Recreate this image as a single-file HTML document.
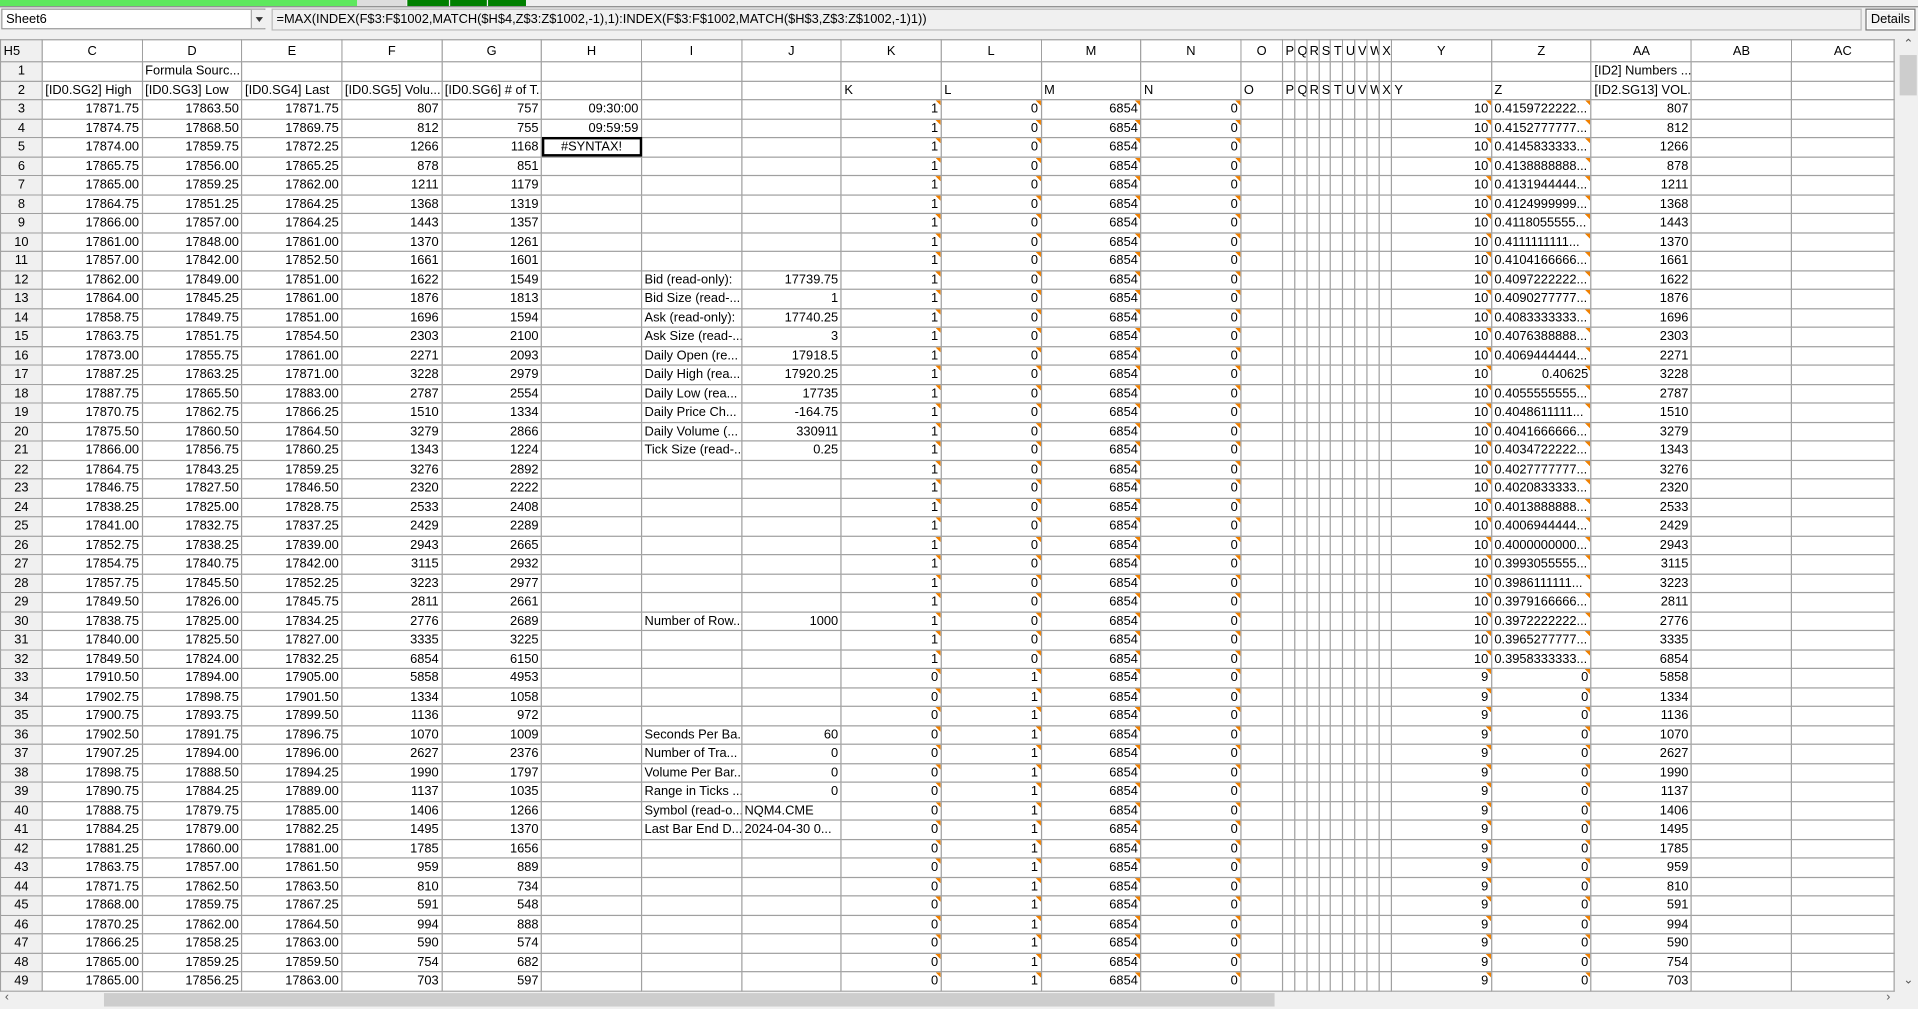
<!DOCTYPE html>
<html><head><meta charset="utf-8">
<style>
html,body{margin:0;padding:0;background:#f0f0f0;overflow:hidden;width:1918px;height:1009px}
#w{position:absolute;left:0;top:0;width:1568px;height:825px;transform:scale(1.22321,1.2230);transform-origin:0 0;font-family:"Liberation Sans",sans-serif;font-size:10.5px;color:#000;background:#f0f0f0}
.bar{position:absolute;top:0;height:5px}
#nm{position:absolute;left:1px;top:7px;width:216px;height:17px;background:#fff;border:1px solid #999;box-sizing:border-box;padding:2px 3px;font-size:10.5px}
#dd{position:absolute;left:205px;top:8px;width:12px;height:15px;background:#f0f0f0;border-left:1px solid #aaa}
#dd:after{content:"";position:absolute;left:3px;top:6px;border:3px solid transparent;border-top:4px solid #333}
#fx{position:absolute;left:222px;top:7px;width:1300px;height:18px;border:1px solid #bbb;box-sizing:border-box;padding:2px 3px;background:#f0f0f0}
#det{position:absolute;left:1525px;top:7px;width:41px;height:18px;border:1px solid #777;box-sizing:border-box;background:#f4f4f4;text-align:center;padding-top:2px;box-shadow:inset 0 0 0 1px #fff}
table{position:absolute;left:0;top:32px;border-collapse:collapse;table-layout:fixed;width:1548px;background:#fff}
td,th{border:1px solid #a0a0a0;height:14.5px;padding:0 2px;white-space:nowrap;overflow:hidden;text-overflow:clip;text-align:right;font-weight:normal;line-height:14px;position:relative}
th{background:#f0f0f0;text-align:center}
tr.h th{background:#fff;height:17px}
tr.h th:first-child{background:#f0f0f0}
td.l{text-align:left}
td.c{text-align:center}
tr.d td:nth-child(10),tr.d td:nth-child(11),tr.d td:nth-child(12),tr.d td:nth-child(13),tr.d td:nth-child(24),tr.d td:nth-child(25){background:linear-gradient(225deg,#f08000 0,#f08000 3px,transparent 3.1px) no-repeat}
#sel{position:absolute;left:443px;top:111.5px;width:82px;height:16px;border:2px solid #000;box-sizing:border-box}
#vs{position:absolute;left:1552px;top:32px;width:16px;height:779px;background:#f0f0f0}
#vt{position:absolute;left:1553px;top:45px;width:14px;height:33px;background:#cdcdcd}
#hs{position:absolute;left:0;top:811px;width:1552px;height:13px;background:#f0f0f0}
#ht{position:absolute;left:85px;top:812px;width:957px;height:11px;background:#cdcdcd}
.ar{position:absolute;font-size:10px;color:#555}
</style></head><body><div id="w">
<div class="bar" style="left:0;width:292px;background:#5ee85e"></div>
<div class="bar" style="left:292px;width:40px;background:#ddd"></div>
<div class="bar" style="left:333px;width:34px;background:#008000"></div>
<div class="bar" style="left:368px;width:30px;background:#008000"></div>
<div class="bar" style="left:399px;width:31px;background:#008000"></div>
<div style="position:absolute;left:0;top:5px;width:1568px;height:1px;background:#888"></div>
<div id="nm">Sheet6</div><div id="dd"></div>
<div id="fx">=MAX(INDEX(F$3:F$1002,MATCH($H$4,Z$3:Z$1002,-1),1):INDEX(F$3:F$1002,MATCH($H$3,Z$3:Z$1002,-1)1))</div>
<div id="det">Details</div>
<table>
<colgroup><col style="width:34px"><col span="12" style="width:81.67px"><col style="width:34px"><col span="9" style="width:9.9px"><col span="4" style="width:81.8px"><col style="width:84px"></colgroup>
<tr class="h"><th style="text-align:left">H5</th><th>C</th><th>D</th><th>E</th><th>F</th><th>G</th><th>H</th><th>I</th><th>J</th><th>K</th><th>L</th><th>M</th><th>N</th><th>O</th><th>P</th><th>Q</th><th>R</th><th>S</th><th>T</th><th>U</th><th>V</th><th>W</th><th>X</th><th>Y</th><th>Z</th><th>AA</th><th>AB</th><th>AC</th></tr>
<tr><th>1</th><td></td><td class="l">Formula Sourc...</td><td></td><td></td><td></td><td></td><td></td><td></td><td></td><td></td><td></td><td></td><td></td><td></td><td></td><td></td><td></td><td></td><td></td><td></td><td></td><td></td><td></td><td></td><td class="l">[ID2] Numbers ...</td><td></td><td></td></tr>
<tr><th>2</th><td class="l">[ID0.SG2] High</td><td class="l">[ID0.SG3] Low</td><td class="l">[ID0.SG4] Last</td><td class="l">[ID0.SG5] Volu...</td><td class="l">[ID0.SG6] # of T...</td><td></td><td></td><td></td><td class="l">K</td><td class="l">L</td><td class="l">M</td><td class="l">N</td><td class="l">O</td><td class="l">P</td><td class="l">Q</td><td class="l">R</td><td class="l">S</td><td class="l">T</td><td class="l">U</td><td class="l">V</td><td class="l">W</td><td class="l">X</td><td class="l">Y</td><td class="l">Z</td><td class="l">[ID2.SG13] VOL...</td><td></td><td></td></tr>
<tr class="d"><th>3</th><td>17871.75</td><td>17863.50</td><td>17871.75</td><td>807</td><td>757</td><td>09:30:00</td><td></td><td></td><td>1</td><td>0</td><td>6854</td><td>0</td><td></td><td></td><td></td><td></td><td></td><td></td><td></td><td></td><td></td><td></td><td>10</td><td class="l">0.4159722222...</td><td>807</td><td></td><td></td></tr>
<tr class="d"><th>4</th><td>17874.75</td><td>17868.50</td><td>17869.75</td><td>812</td><td>755</td><td>09:59:59</td><td></td><td></td><td>1</td><td>0</td><td>6854</td><td>0</td><td></td><td></td><td></td><td></td><td></td><td></td><td></td><td></td><td></td><td></td><td>10</td><td class="l">0.4152777777...</td><td>812</td><td></td><td></td></tr>
<tr class="d"><th>5</th><td>17874.00</td><td>17859.75</td><td>17872.25</td><td>1266</td><td>1168</td><td class="c">#SYNTAX!</td><td></td><td></td><td>1</td><td>0</td><td>6854</td><td>0</td><td></td><td></td><td></td><td></td><td></td><td></td><td></td><td></td><td></td><td></td><td>10</td><td class="l">0.4145833333...</td><td>1266</td><td></td><td></td></tr>
<tr class="d"><th>6</th><td>17865.75</td><td>17856.00</td><td>17865.25</td><td>878</td><td>851</td><td></td><td></td><td></td><td>1</td><td>0</td><td>6854</td><td>0</td><td></td><td></td><td></td><td></td><td></td><td></td><td></td><td></td><td></td><td></td><td>10</td><td class="l">0.4138888888...</td><td>878</td><td></td><td></td></tr>
<tr class="d"><th>7</th><td>17865.00</td><td>17859.25</td><td>17862.00</td><td>1211</td><td>1179</td><td></td><td></td><td></td><td>1</td><td>0</td><td>6854</td><td>0</td><td></td><td></td><td></td><td></td><td></td><td></td><td></td><td></td><td></td><td></td><td>10</td><td class="l">0.4131944444...</td><td>1211</td><td></td><td></td></tr>
<tr class="d"><th>8</th><td>17864.75</td><td>17851.25</td><td>17864.25</td><td>1368</td><td>1319</td><td></td><td></td><td></td><td>1</td><td>0</td><td>6854</td><td>0</td><td></td><td></td><td></td><td></td><td></td><td></td><td></td><td></td><td></td><td></td><td>10</td><td class="l">0.4124999999...</td><td>1368</td><td></td><td></td></tr>
<tr class="d"><th>9</th><td>17866.00</td><td>17857.00</td><td>17864.25</td><td>1443</td><td>1357</td><td></td><td></td><td></td><td>1</td><td>0</td><td>6854</td><td>0</td><td></td><td></td><td></td><td></td><td></td><td></td><td></td><td></td><td></td><td></td><td>10</td><td class="l">0.4118055555...</td><td>1443</td><td></td><td></td></tr>
<tr class="d"><th>10</th><td>17861.00</td><td>17848.00</td><td>17861.00</td><td>1370</td><td>1261</td><td></td><td></td><td></td><td>1</td><td>0</td><td>6854</td><td>0</td><td></td><td></td><td></td><td></td><td></td><td></td><td></td><td></td><td></td><td></td><td>10</td><td class="l">0.4111111111...</td><td>1370</td><td></td><td></td></tr>
<tr class="d"><th>11</th><td>17857.00</td><td>17842.00</td><td>17852.50</td><td>1661</td><td>1601</td><td></td><td></td><td></td><td>1</td><td>0</td><td>6854</td><td>0</td><td></td><td></td><td></td><td></td><td></td><td></td><td></td><td></td><td></td><td></td><td>10</td><td class="l">0.4104166666...</td><td>1661</td><td></td><td></td></tr>
<tr class="d"><th>12</th><td>17862.00</td><td>17849.00</td><td>17851.00</td><td>1622</td><td>1549</td><td></td><td class="l">Bid (read-only):</td><td>17739.75</td><td>1</td><td>0</td><td>6854</td><td>0</td><td></td><td></td><td></td><td></td><td></td><td></td><td></td><td></td><td></td><td></td><td>10</td><td class="l">0.4097222222...</td><td>1622</td><td></td><td></td></tr>
<tr class="d"><th>13</th><td>17864.00</td><td>17845.25</td><td>17861.00</td><td>1876</td><td>1813</td><td></td><td class="l">Bid Size (read-...</td><td>1</td><td>1</td><td>0</td><td>6854</td><td>0</td><td></td><td></td><td></td><td></td><td></td><td></td><td></td><td></td><td></td><td></td><td>10</td><td class="l">0.4090277777...</td><td>1876</td><td></td><td></td></tr>
<tr class="d"><th>14</th><td>17858.75</td><td>17849.75</td><td>17851.00</td><td>1696</td><td>1594</td><td></td><td class="l">Ask (read-only):</td><td>17740.25</td><td>1</td><td>0</td><td>6854</td><td>0</td><td></td><td></td><td></td><td></td><td></td><td></td><td></td><td></td><td></td><td></td><td>10</td><td class="l">0.4083333333...</td><td>1696</td><td></td><td></td></tr>
<tr class="d"><th>15</th><td>17863.75</td><td>17851.75</td><td>17854.50</td><td>2303</td><td>2100</td><td></td><td class="l">Ask Size (read-...</td><td>3</td><td>1</td><td>0</td><td>6854</td><td>0</td><td></td><td></td><td></td><td></td><td></td><td></td><td></td><td></td><td></td><td></td><td>10</td><td class="l">0.4076388888...</td><td>2303</td><td></td><td></td></tr>
<tr class="d"><th>16</th><td>17873.00</td><td>17855.75</td><td>17861.00</td><td>2271</td><td>2093</td><td></td><td class="l">Daily Open (re...</td><td>17918.5</td><td>1</td><td>0</td><td>6854</td><td>0</td><td></td><td></td><td></td><td></td><td></td><td></td><td></td><td></td><td></td><td></td><td>10</td><td class="l">0.4069444444...</td><td>2271</td><td></td><td></td></tr>
<tr class="d"><th>17</th><td>17887.25</td><td>17863.25</td><td>17871.00</td><td>3228</td><td>2979</td><td></td><td class="l">Daily High (rea...</td><td>17920.25</td><td>1</td><td>0</td><td>6854</td><td>0</td><td></td><td></td><td></td><td></td><td></td><td></td><td></td><td></td><td></td><td></td><td>10</td><td>0.40625</td><td>3228</td><td></td><td></td></tr>
<tr class="d"><th>18</th><td>17887.75</td><td>17865.50</td><td>17883.00</td><td>2787</td><td>2554</td><td></td><td class="l">Daily Low (rea...</td><td>17735</td><td>1</td><td>0</td><td>6854</td><td>0</td><td></td><td></td><td></td><td></td><td></td><td></td><td></td><td></td><td></td><td></td><td>10</td><td class="l">0.4055555555...</td><td>2787</td><td></td><td></td></tr>
<tr class="d"><th>19</th><td>17870.75</td><td>17862.75</td><td>17866.25</td><td>1510</td><td>1334</td><td></td><td class="l">Daily Price Ch...</td><td>-164.75</td><td>1</td><td>0</td><td>6854</td><td>0</td><td></td><td></td><td></td><td></td><td></td><td></td><td></td><td></td><td></td><td></td><td>10</td><td class="l">0.4048611111...</td><td>1510</td><td></td><td></td></tr>
<tr class="d"><th>20</th><td>17875.50</td><td>17860.50</td><td>17864.50</td><td>3279</td><td>2866</td><td></td><td class="l">Daily Volume (...</td><td>330911</td><td>1</td><td>0</td><td>6854</td><td>0</td><td></td><td></td><td></td><td></td><td></td><td></td><td></td><td></td><td></td><td></td><td>10</td><td class="l">0.4041666666...</td><td>3279</td><td></td><td></td></tr>
<tr class="d"><th>21</th><td>17866.00</td><td>17856.75</td><td>17860.25</td><td>1343</td><td>1224</td><td></td><td class="l">Tick Size (read-...</td><td>0.25</td><td>1</td><td>0</td><td>6854</td><td>0</td><td></td><td></td><td></td><td></td><td></td><td></td><td></td><td></td><td></td><td></td><td>10</td><td class="l">0.4034722222...</td><td>1343</td><td></td><td></td></tr>
<tr class="d"><th>22</th><td>17864.75</td><td>17843.25</td><td>17859.25</td><td>3276</td><td>2892</td><td></td><td></td><td></td><td>1</td><td>0</td><td>6854</td><td>0</td><td></td><td></td><td></td><td></td><td></td><td></td><td></td><td></td><td></td><td></td><td>10</td><td class="l">0.4027777777...</td><td>3276</td><td></td><td></td></tr>
<tr class="d"><th>23</th><td>17846.75</td><td>17827.50</td><td>17846.50</td><td>2320</td><td>2222</td><td></td><td></td><td></td><td>1</td><td>0</td><td>6854</td><td>0</td><td></td><td></td><td></td><td></td><td></td><td></td><td></td><td></td><td></td><td></td><td>10</td><td class="l">0.4020833333...</td><td>2320</td><td></td><td></td></tr>
<tr class="d"><th>24</th><td>17838.25</td><td>17825.00</td><td>17828.75</td><td>2533</td><td>2408</td><td></td><td></td><td></td><td>1</td><td>0</td><td>6854</td><td>0</td><td></td><td></td><td></td><td></td><td></td><td></td><td></td><td></td><td></td><td></td><td>10</td><td class="l">0.4013888888...</td><td>2533</td><td></td><td></td></tr>
<tr class="d"><th>25</th><td>17841.00</td><td>17832.75</td><td>17837.25</td><td>2429</td><td>2289</td><td></td><td></td><td></td><td>1</td><td>0</td><td>6854</td><td>0</td><td></td><td></td><td></td><td></td><td></td><td></td><td></td><td></td><td></td><td></td><td>10</td><td class="l">0.4006944444...</td><td>2429</td><td></td><td></td></tr>
<tr class="d"><th>26</th><td>17852.75</td><td>17838.25</td><td>17839.00</td><td>2943</td><td>2665</td><td></td><td></td><td></td><td>1</td><td>0</td><td>6854</td><td>0</td><td></td><td></td><td></td><td></td><td></td><td></td><td></td><td></td><td></td><td></td><td>10</td><td class="l">0.4000000000...</td><td>2943</td><td></td><td></td></tr>
<tr class="d"><th>27</th><td>17854.75</td><td>17840.75</td><td>17842.00</td><td>3115</td><td>2932</td><td></td><td></td><td></td><td>1</td><td>0</td><td>6854</td><td>0</td><td></td><td></td><td></td><td></td><td></td><td></td><td></td><td></td><td></td><td></td><td>10</td><td class="l">0.3993055555...</td><td>3115</td><td></td><td></td></tr>
<tr class="d"><th>28</th><td>17857.75</td><td>17845.50</td><td>17852.25</td><td>3223</td><td>2977</td><td></td><td></td><td></td><td>1</td><td>0</td><td>6854</td><td>0</td><td></td><td></td><td></td><td></td><td></td><td></td><td></td><td></td><td></td><td></td><td>10</td><td class="l">0.3986111111...</td><td>3223</td><td></td><td></td></tr>
<tr class="d"><th>29</th><td>17849.50</td><td>17826.00</td><td>17845.75</td><td>2811</td><td>2661</td><td></td><td></td><td></td><td>1</td><td>0</td><td>6854</td><td>0</td><td></td><td></td><td></td><td></td><td></td><td></td><td></td><td></td><td></td><td></td><td>10</td><td class="l">0.3979166666...</td><td>2811</td><td></td><td></td></tr>
<tr class="d"><th>30</th><td>17838.75</td><td>17825.00</td><td>17834.25</td><td>2776</td><td>2689</td><td></td><td class="l">Number of Row...</td><td>1000</td><td>1</td><td>0</td><td>6854</td><td>0</td><td></td><td></td><td></td><td></td><td></td><td></td><td></td><td></td><td></td><td></td><td>10</td><td class="l">0.3972222222...</td><td>2776</td><td></td><td></td></tr>
<tr class="d"><th>31</th><td>17840.00</td><td>17825.50</td><td>17827.00</td><td>3335</td><td>3225</td><td></td><td></td><td></td><td>1</td><td>0</td><td>6854</td><td>0</td><td></td><td></td><td></td><td></td><td></td><td></td><td></td><td></td><td></td><td></td><td>10</td><td class="l">0.3965277777...</td><td>3335</td><td></td><td></td></tr>
<tr class="d"><th>32</th><td>17849.50</td><td>17824.00</td><td>17832.25</td><td>6854</td><td>6150</td><td></td><td></td><td></td><td>1</td><td>0</td><td>6854</td><td>0</td><td></td><td></td><td></td><td></td><td></td><td></td><td></td><td></td><td></td><td></td><td>10</td><td class="l">0.3958333333...</td><td>6854</td><td></td><td></td></tr>
<tr class="d"><th>33</th><td>17910.50</td><td>17894.00</td><td>17905.00</td><td>5858</td><td>4953</td><td></td><td></td><td></td><td>0</td><td>1</td><td>6854</td><td>0</td><td></td><td></td><td></td><td></td><td></td><td></td><td></td><td></td><td></td><td></td><td>9</td><td>0</td><td>5858</td><td></td><td></td></tr>
<tr class="d"><th>34</th><td>17902.75</td><td>17898.75</td><td>17901.50</td><td>1334</td><td>1058</td><td></td><td></td><td></td><td>0</td><td>1</td><td>6854</td><td>0</td><td></td><td></td><td></td><td></td><td></td><td></td><td></td><td></td><td></td><td></td><td>9</td><td>0</td><td>1334</td><td></td><td></td></tr>
<tr class="d"><th>35</th><td>17900.75</td><td>17893.75</td><td>17899.50</td><td>1136</td><td>972</td><td></td><td></td><td></td><td>0</td><td>1</td><td>6854</td><td>0</td><td></td><td></td><td></td><td></td><td></td><td></td><td></td><td></td><td></td><td></td><td>9</td><td>0</td><td>1136</td><td></td><td></td></tr>
<tr class="d"><th>36</th><td>17902.50</td><td>17891.75</td><td>17896.75</td><td>1070</td><td>1009</td><td></td><td class="l">Seconds Per Ba...</td><td>60</td><td>0</td><td>1</td><td>6854</td><td>0</td><td></td><td></td><td></td><td></td><td></td><td></td><td></td><td></td><td></td><td></td><td>9</td><td>0</td><td>1070</td><td></td><td></td></tr>
<tr class="d"><th>37</th><td>17907.25</td><td>17894.00</td><td>17896.00</td><td>2627</td><td>2376</td><td></td><td class="l">Number of Tra...</td><td>0</td><td>0</td><td>1</td><td>6854</td><td>0</td><td></td><td></td><td></td><td></td><td></td><td></td><td></td><td></td><td></td><td></td><td>9</td><td>0</td><td>2627</td><td></td><td></td></tr>
<tr class="d"><th>38</th><td>17898.75</td><td>17888.50</td><td>17894.25</td><td>1990</td><td>1797</td><td></td><td class="l">Volume Per Bar...</td><td>0</td><td>0</td><td>1</td><td>6854</td><td>0</td><td></td><td></td><td></td><td></td><td></td><td></td><td></td><td></td><td></td><td></td><td>9</td><td>0</td><td>1990</td><td></td><td></td></tr>
<tr class="d"><th>39</th><td>17890.75</td><td>17884.25</td><td>17889.00</td><td>1137</td><td>1035</td><td></td><td class="l">Range in Ticks ...</td><td>0</td><td>0</td><td>1</td><td>6854</td><td>0</td><td></td><td></td><td></td><td></td><td></td><td></td><td></td><td></td><td></td><td></td><td>9</td><td>0</td><td>1137</td><td></td><td></td></tr>
<tr class="d"><th>40</th><td>17888.75</td><td>17879.75</td><td>17885.00</td><td>1406</td><td>1266</td><td></td><td class="l">Symbol (read-o...</td><td class="l">NQM4.CME</td><td>0</td><td>1</td><td>6854</td><td>0</td><td></td><td></td><td></td><td></td><td></td><td></td><td></td><td></td><td></td><td></td><td>9</td><td>0</td><td>1406</td><td></td><td></td></tr>
<tr class="d"><th>41</th><td>17884.25</td><td>17879.00</td><td>17882.25</td><td>1495</td><td>1370</td><td></td><td class="l">Last Bar End D...</td><td class="l">2024-04-30 0...</td><td>0</td><td>1</td><td>6854</td><td>0</td><td></td><td></td><td></td><td></td><td></td><td></td><td></td><td></td><td></td><td></td><td>9</td><td>0</td><td>1495</td><td></td><td></td></tr>
<tr class="d"><th>42</th><td>17881.25</td><td>17860.00</td><td>17881.00</td><td>1785</td><td>1656</td><td></td><td></td><td></td><td>0</td><td>1</td><td>6854</td><td>0</td><td></td><td></td><td></td><td></td><td></td><td></td><td></td><td></td><td></td><td></td><td>9</td><td>0</td><td>1785</td><td></td><td></td></tr>
<tr class="d"><th>43</th><td>17863.75</td><td>17857.00</td><td>17861.50</td><td>959</td><td>889</td><td></td><td></td><td></td><td>0</td><td>1</td><td>6854</td><td>0</td><td></td><td></td><td></td><td></td><td></td><td></td><td></td><td></td><td></td><td></td><td>9</td><td>0</td><td>959</td><td></td><td></td></tr>
<tr class="d"><th>44</th><td>17871.75</td><td>17862.50</td><td>17863.50</td><td>810</td><td>734</td><td></td><td></td><td></td><td>0</td><td>1</td><td>6854</td><td>0</td><td></td><td></td><td></td><td></td><td></td><td></td><td></td><td></td><td></td><td></td><td>9</td><td>0</td><td>810</td><td></td><td></td></tr>
<tr class="d"><th>45</th><td>17868.00</td><td>17859.75</td><td>17867.25</td><td>591</td><td>548</td><td></td><td></td><td></td><td>0</td><td>1</td><td>6854</td><td>0</td><td></td><td></td><td></td><td></td><td></td><td></td><td></td><td></td><td></td><td></td><td>9</td><td>0</td><td>591</td><td></td><td></td></tr>
<tr class="d"><th>46</th><td>17870.25</td><td>17862.00</td><td>17864.50</td><td>994</td><td>888</td><td></td><td></td><td></td><td>0</td><td>1</td><td>6854</td><td>0</td><td></td><td></td><td></td><td></td><td></td><td></td><td></td><td></td><td></td><td></td><td>9</td><td>0</td><td>994</td><td></td><td></td></tr>
<tr class="d"><th>47</th><td>17866.25</td><td>17858.25</td><td>17863.00</td><td>590</td><td>574</td><td></td><td></td><td></td><td>0</td><td>1</td><td>6854</td><td>0</td><td></td><td></td><td></td><td></td><td></td><td></td><td></td><td></td><td></td><td></td><td>9</td><td>0</td><td>590</td><td></td><td></td></tr>
<tr class="d"><th>48</th><td>17865.00</td><td>17859.25</td><td>17859.50</td><td>754</td><td>682</td><td></td><td></td><td></td><td>0</td><td>1</td><td>6854</td><td>0</td><td></td><td></td><td></td><td></td><td></td><td></td><td></td><td></td><td></td><td></td><td>9</td><td>0</td><td>754</td><td></td><td></td></tr>
<tr class="d"><th>49</th><td>17865.00</td><td>17856.25</td><td>17863.00</td><td>703</td><td>597</td><td></td><td></td><td></td><td>0</td><td>1</td><td>6854</td><td>0</td><td></td><td></td><td></td><td></td><td></td><td></td><td></td><td></td><td></td><td></td><td>9</td><td>0</td><td>703</td><td></td><td></td></tr>
</table>
<div id="sel"></div>
<div id="vs"></div><div id="vt"></div>
<div class="ar" style="left:1556px;top:31px">&#8963;</div>
<div class="ar" style="left:1556px;top:796px">&#8964;</div>
<div id="hs"></div><div id="ht"></div>
<div class="ar" style="left:4px;top:810px">&#8249;</div>
<div class="ar" style="left:1542px;top:810px">&#8250;</div>
</div></body></html>
